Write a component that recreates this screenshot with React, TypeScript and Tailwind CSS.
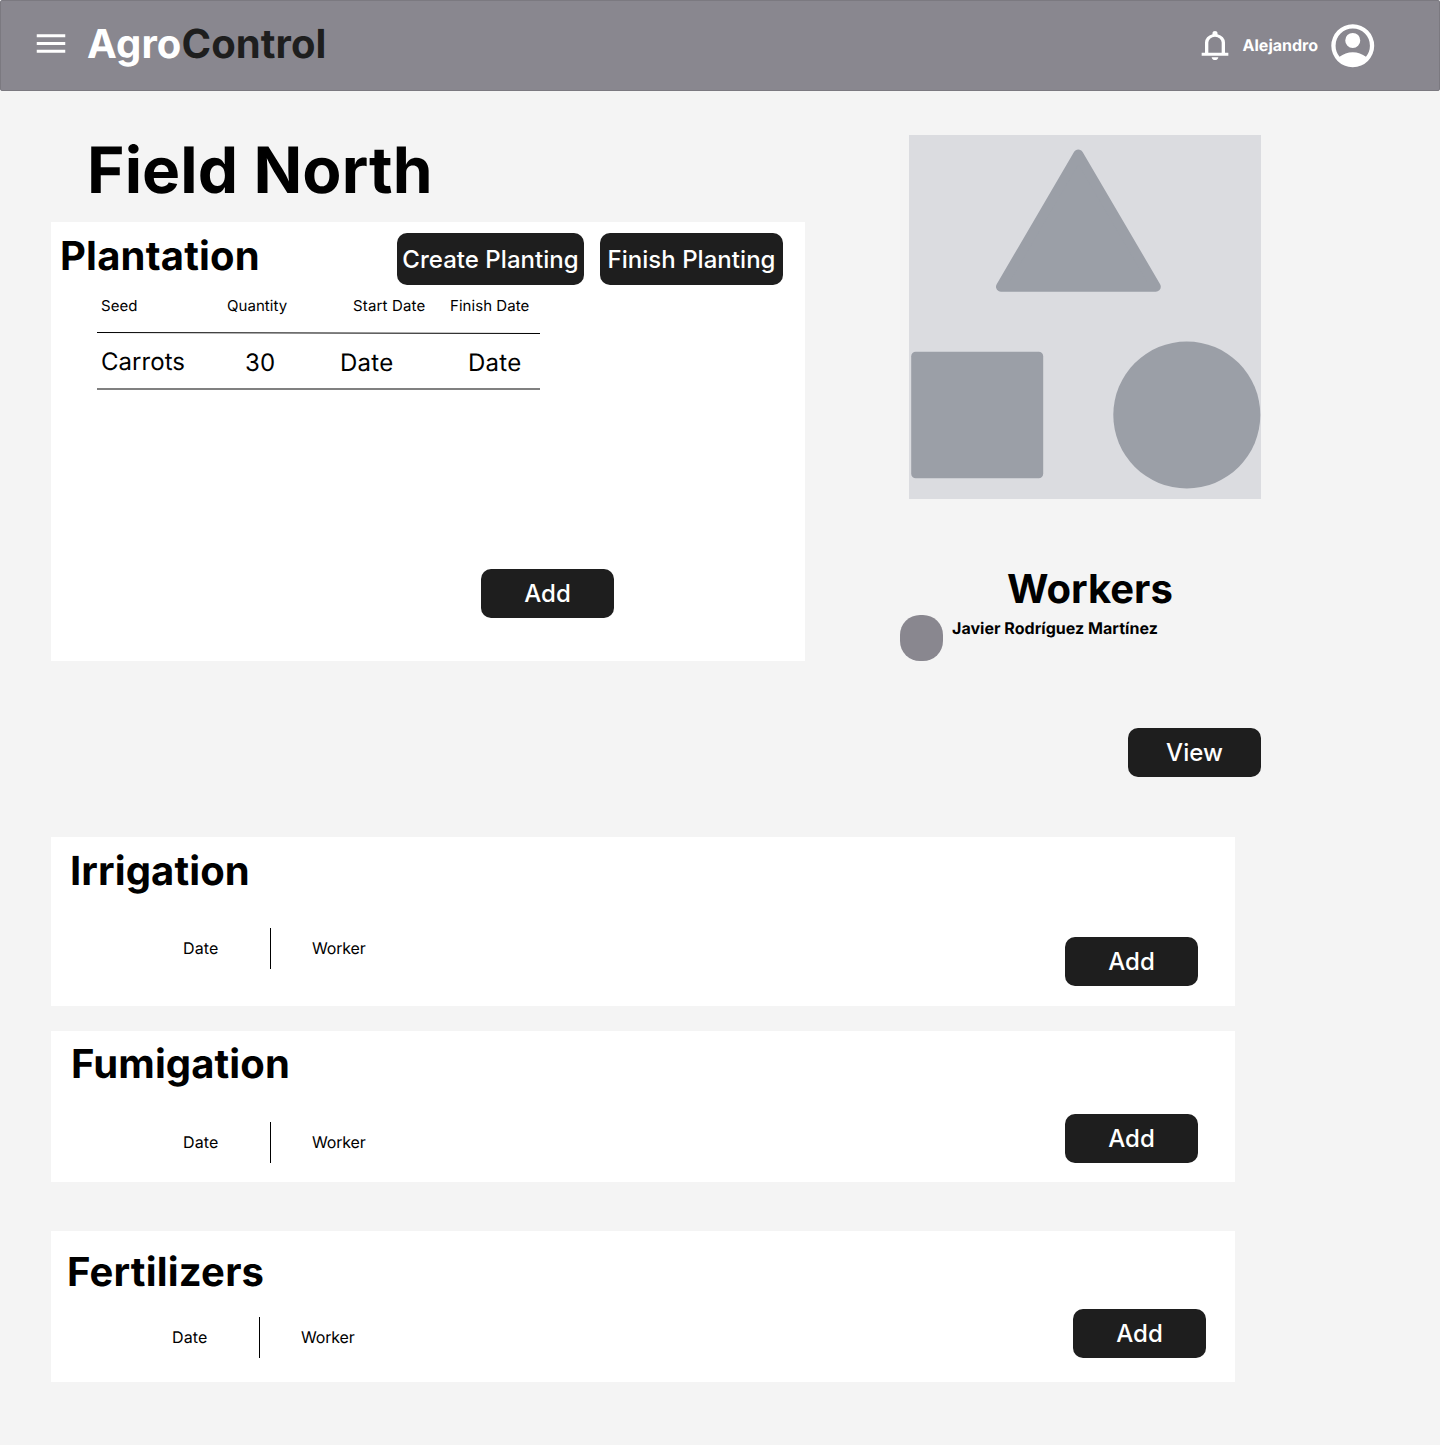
import React from "react";

function MenuIcon() {
  return (
    <svg viewBox="0 0 24 24" preserveAspectRatio="none" className="h-[37px] w-[38px] fill-white">
      <path d="M3 18v-2h18v2zm0-5v-2h18v2zm0-5V6h18v2z" />
    </svg>
  );
}

function BellIcon() {
  return (
    <svg viewBox="0 0 24 24" preserveAspectRatio="none" className="h-[35px] w-[40px] fill-white">
      <path d="M4 19v-2h2v-7q0-2.075 1.25-3.687T10.5 4.2v-.7q0-.625.438-1.062T12 2t1.063.438T13.5 3.5v.7q2 .5 3.25 2.113T18 10v7h2v2zm8 3q-.825 0-1.412-.587T10 20h4q0 .825-.587 1.413T12 22m-4-5h8v-7q0-1.65-1.175-2.825T12 6T9.175 7.175T8 10z" />
    </svg>
  );
}

function AccountIcon() {
  return (
    <svg viewBox="0 0 24 24" className="size-[51.5px] fill-white">
      <path d="M5.85 17.1q1.275-.975 2.85-1.537T12 15t3.3.563t2.85 1.537q.875-1.025 1.363-2.325T20 12q0-3.325-2.337-5.663T12 4T6.337 6.338T4 12q0 1.475.488 2.775T5.85 17.1M12 13q-1.475 0-2.488-1.012T8.5 9.5t1.013-2.488T12 6t2.488 1.013T15.5 9.5t-1.012 2.488T12 13m0 9q-2.075 0-3.9-.788t-3.175-2.137T2.788 15.9T2 12t.788-3.9t2.137-3.175T8.1 2.788T12 2t3.9.788t3.175 2.137T21.213 8.1T22 12t-.788 3.9t-2.137 3.175t-3.175 2.138T12 22" />
    </svg>
  );
}

function Button({ children, className = "h-[49px] w-[133px]" }: { children: React.ReactNode; className?: string }) {
  return (
    <button
      className={`flex shrink-0 items-center justify-center rounded-[10px] bg-[#1e1e1e] text-2xl leading-[29px] font-medium tracking-[0.04px] whitespace-nowrap text-white ${className}`}
    >
      {children}
    </button>
  );
}

function Heading({ children, className = "" }: { children: React.ReactNode; className?: string }) {
  return <h2 className={`text-[40px] leading-[48px] font-bold whitespace-nowrap ${className}`}>{children}</h2>;
}

/* Placeholder picture of the field */
function FieldImage() {
  return (
    <svg viewBox="0 0 352 364" className="ml-[9px] h-[364px] w-[352px] bg-[#dbdce0]" fill="#9b9fa7">
      <path d="M169.3 19.5 92 151.7h154.8z" stroke="#9b9fa7" strokeWidth="10" strokeLinejoin="round" />
      <rect x="2.2" y="216.8" width="132" height="126.5" rx="4.5" />
      <circle cx="277.8" cy="280" r="73.5" />
    </svg>
  );
}

function DateWorker() {
  return (
    <div className="flex h-[41px] text-base leading-5">
      <span className="w-[88px] pt-[10px] pl-px tracking-[0.15px]">Date</span>
      <span className="h-full w-px bg-black" />
      <span className="ml-[41px] pt-[10px] tracking-[-0.18px]">Worker</span>
    </div>
  );
}

export default function App() {
  return (
    <div className="min-h-[1445px] w-[1440px] bg-[#f4f4f4] font-['Inter',sans-serif] text-black [text-rendering:geometricPrecision]">
      <header className="flex h-[91px] items-center justify-between rounded-[2px] border border-[#7b7980] bg-[#89878f] pr-[60.5px] pl-[31px]">
        <div className="flex items-center gap-[17px] pb-[4px]">
          <MenuIcon />
          <div className="text-[40px] leading-[48px] font-bold tracking-[0.1px] text-[#1e1e1e]">
            <span className="text-white">Agro</span>Control
          </div>
        </div>
        <div className="flex items-center">
          <div className="flex items-center pb-px">
            <BellIcon />
            <span className="mr-[9px] ml-[8px] text-base leading-5 font-bold text-white">Alejandro</span>
          </div>
          <AccountIcon />
        </div>
      </header>

      <main className="pl-[51px]">
        <div className="flex h-[746px] gap-[95px]">
          <section className="w-[754px] pt-[41px]">
            <h1 className="pl-[36px] text-[64px] leading-[77px] font-bold tracking-[0.1px]">Field North</h1>
            <div className="mt-[13px] h-[439px] bg-white">
              <div className="flex h-[63px] items-start pt-[10px] pr-[22px] pl-[9px]">
                <div className="grow">
                  <Heading className="tracking-[0.2px]">Plantation</Heading>
                </div>
                <div className="flex gap-4 pt-px">
                  <Button className="h-[52px] w-[187px]">Create Planting</Button>
                  <Button className="h-[52px] w-[183px]">Finish Planting</Button>
                </div>
              </div>
              <div className="ml-[46px] w-[443px]">
                <div className="grid grid-cols-[126px_126px_97px_90px] pt-[12px] pl-[4px] text-[15px] leading-[18px] tracking-[0.05px]">
                  <span>Seed</span>
                  <span>Quantity</span>
                  <span className="tracking-[0.15px]">Start Date</span>
                  <span>Finish Date</span>
                </div>
                <svg viewBox="0 0 443 2" className="mt-[17px] block h-[2px] w-full">
                  <path d="M0 .5 443 1.5" stroke="#000" />
                </svg>
                <div className="grid h-[54px] grid-cols-[144px_95px_128px_70px] items-center pt-[2px] pl-[4px] text-2xl leading-[29px] tracking-[0.25px]">
                  <span className="pb-[2px] tracking-[0.05px]">Carrots</span>
                  <span>30</span>
                  <span>Date</span>
                  <span>Date</span>
                </div>
                <div className="h-[2px] bg-[#808080]" />
              </div>
              <div className="mt-[179px] ml-[430px]">
                <Button>Add</Button>
              </div>
            </div>
          </section>

          <aside className="w-[361px] pt-[44px]">
            <FieldImage />
            <div className="mt-[66px] pl-[107px]">
              <Heading>Workers</Heading>
            </div>
            <div className="mt-[2px] flex gap-[9px]">
              <span className="h-[46px] w-[43px] rounded-[20px] bg-[#89878f]" />
              <span className="pt-[3px] text-base leading-5 font-bold tracking-[0.03px]">Javier Rodríguez Martínez</span>
            </div>
            <div className="mt-[67px] flex justify-end">
              <Button>View</Button>
            </div>
          </aside>
        </div>

        <section className="flex h-[169px] w-[1184px] items-start justify-between bg-white pt-[10px] pr-[37px] pl-[19px]">
          <div>
            <Heading className="tracking-[0.12px]">Irrigation</Heading>
            <div className="mt-[33px] ml-[112px]">
              <DateWorker />
            </div>
          </div>
          <Button className="mt-[90px] h-[49px] w-[133px]">Add</Button>
        </section>

        <section className="mt-[25px] flex h-[151px] w-[1184px] items-start justify-between bg-white pt-[9px] pr-[37px] pl-[20px]">
          <div>
            <Heading className="tracking-[0.12px]">Fumigation</Heading>
            <div className="mt-[34px] ml-[111px]">
              <DateWorker />
            </div>
          </div>
          <Button className="mt-[74px] h-[49px] w-[133px]">Add</Button>
        </section>

        <section className="mt-[49px] flex h-[151px] w-[1184px] items-start justify-between bg-white pt-[17px] pr-[29px] pl-[16px]">
          <div>
            <Heading className="tracking-[0.2px]">Fertilizers</Heading>
            <div className="mt-[21px] ml-[104px]">
              <DateWorker />
            </div>
          </div>
          <Button className="mt-[61px] h-[49px] w-[133px]">Add</Button>
        </section>
      </main>
    </div>
  );
}
